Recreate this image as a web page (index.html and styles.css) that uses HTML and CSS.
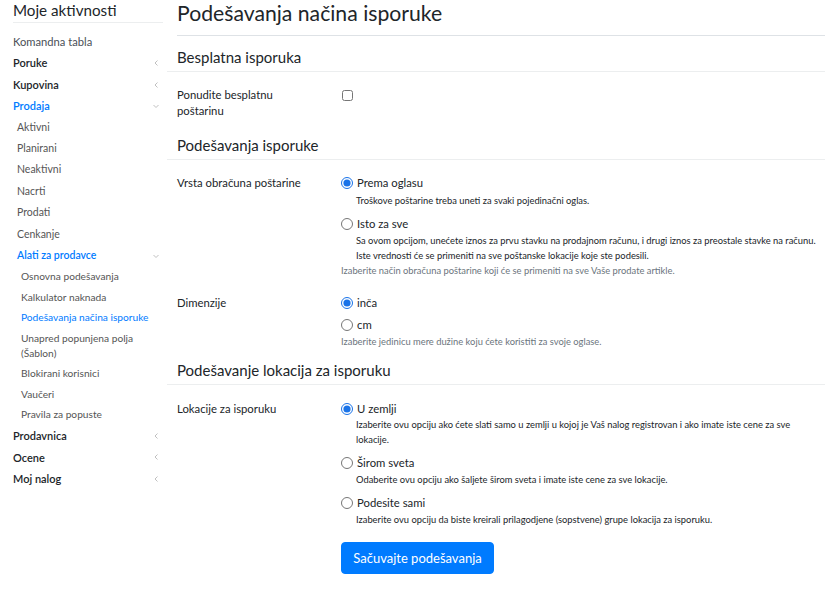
FILE: index.html
```html
<!DOCTYPE html>
<html lang="sr">
<head>
<meta charset="utf-8">
<title>Podešavanja načina isporuke</title>
<link rel="stylesheet" href="styles.css">
</head>
<body>
<div class="page">
  <aside class="sidebar">
    <h2 class="side-title">Moje aktivnosti</h2>
    <ul class="menu">
      <li class="item plain">Komandna tabla</li>
      <li class="item top"><span>Poruke</span><svg class="chev" viewBox="0 0 8 8"><path d="M5.5 1.5 3 4l2.5 2.5"/></svg></li>
      <li class="item top"><span>Kupovina</span><svg class="chev" viewBox="0 0 8 8"><path d="M5.5 1.5 3 4l2.5 2.5"/></svg></li>
      <li class="item top active"><span>Prodaja</span><svg class="chev" viewBox="0 0 8 8"><path d="M1.5 3 4 5.5 6.5 3"/></svg></li>
      <li class="item sub">Aktivni</li>
      <li class="item sub">Planirani</li>
      <li class="item sub">Neaktivni</li>
      <li class="item sub">Nacrti</li>
      <li class="item sub">Prodati</li>
      <li class="item sub">Cenkanje</li>
      <li class="item sub sub-head active"><span>Alati za prodavce</span><svg class="chev" viewBox="0 0 8 8"><path d="M1.5 3 4 5.5 6.5 3"/></svg></li>
      <li class="item subsub">Osnovna podešavanja</li>
      <li class="item subsub">Kalkulator naknada</li>
      <li class="item subsub current">Podešavanja načina isporuke</li>
      <li class="item subsub">Unapred popunjena polja (Šablon)</li>
      <li class="item subsub">Blokirani korisnici</li>
      <li class="item subsub">Vaučeri</li>
      <li class="item subsub">Pravila za popuste</li>
      <li class="item top"><span>Prodavnica</span><svg class="chev" viewBox="0 0 8 8"><path d="M5.5 1.5 3 4l2.5 2.5"/></svg></li>
      <li class="item top"><span>Ocene</span><svg class="chev" viewBox="0 0 8 8"><path d="M5.5 1.5 3 4l2.5 2.5"/></svg></li>
      <li class="item top"><span>Moj nalog</span><svg class="chev" viewBox="0 0 8 8"><path d="M5.5 1.5 3 4l2.5 2.5"/></svg></li>
    </ul>
  </aside>

  <main class="content">
    <h1 class="page-title">Podešavanja načina isporuke</h1>

    <h3 class="section-title">Besplatna isporuka</h3>
    <div class="row row-free">
      <div class="label">Ponudite besplatnu<br>poštarinu</div>
      <div class="control"><input type="checkbox" class="check"></div>
    </div>

    <h3 class="section-title">Podešavanja isporuke</h3>
    <div class="row">
      <div class="label">Vrsta obračuna poštarine</div>
      <div class="control">
        <label class="opt"><input type="radio" name="v" checked><span>Prema oglasu</span></label>
        <p class="help">Troškove poštarine treba uneti za svaki pojedinačni oglas.</p>
        <label class="opt"><input type="radio" name="v"><span>Isto za sve</span></label>
        <p class="help help-last">Sa ovom opcijom, unećete iznos za prvu stavku na prodajnom računu, i drugi iznos za preostale stavke na računu. Iste vrednosti će se primeniti na sve poštanske lokacije koje ste podesili.</p>
        <p class="muted">Izaberite način obračuna poštarine koji će se primeniti na sve Vaše prodate artikle.</p>
      </div>
    </div>
    <div class="row row-dim">
      <div class="label">Dimenzije</div>
      <div class="control">
        <label class="opt"><input type="radio" name="d" checked><span>inča</span></label>
        <label class="opt opt-tight"><input type="radio" name="d"><span>cm</span></label>
        <p class="muted">Izaberite jedinicu mere dužine koju ćete koristiti za svoje oglase.</p>
      </div>
    </div>

    <h3 class="section-title">Podešavanje lokacija za isporuku</h3>
    <div class="row row-loc">
      <div class="label">Lokacije za isporuku</div>
      <div class="control">
        <label class="opt"><input type="radio" name="l" checked><span>U zemlji</span></label>
        <p class="help">Izaberite ovu opciju ako ćete slati samo u zemlji u kojoj je Vaš nalog registrovan i ako imate iste cene za sve lokacije.</p>
        <label class="opt"><input type="radio" name="l"><span>Širom sveta</span></label>
        <p class="help">Odaberite ovu opciju ako šaljete širom sveta i imate iste cene za sve lokacije.</p>
        <label class="opt"><input type="radio" name="l"><span>Podesite sami</span></label>
        <p class="help help-last">Izaberite ovu opciju da biste kreirali prilagodjene (sopstvene) grupe lokacija za isporuku.</p>
        <button class="btn" type="button">Sačuvajte podešavanja</button>
      </div>
    </div>
  </main>
</div>
</body>
</html>
```

FILE: styles.css
```css
* { box-sizing: border-box; }
html, body { margin: 0; padding: 0; background: #fff; }
body {
  font-family: Lato, "Noto Sans", Arial, sans-serif;
  color: #212529;
  font-size: 11.3px;
}
.page { display: flex; align-items: flex-start; }

.sidebar { width: 167px; padding-left: 13px; padding-right: 4px; flex: none; }
.side-title {
  margin: 0;
  font-size: 15.2px;
  font-weight: 400;
  line-height: 20px;
  padding-bottom: 2px;
  border-bottom: 1px solid #eceeef;
  color: #212529;
}
.menu { list-style: none; margin: 8px 0 0; padding: 0; }
.item {
  display: flex; align-items: center; justify-content: space-between;
  line-height: 15.4px; padding: 3px 0;
  font-size: 11.2px;
}
.item.plain { color: #495057; }
.item.top { color: #212529; font-weight: 600; font-size: 11px; }
.item.active { color: #007bff; }
.item.sub { padding-left: 4px; font-size: 10.5px; color: #555; }
.item.sub-head { font-weight: 600; color: #007bff; }
.item.subsub { padding: 2.55px 0 2.55px 8px; font-size: 10.2px; color: #555; line-height: 15.4px; }
.item.current { color: #007bff; }
.chev { width: 8px; height: 8px; margin-right: 3px; fill: none; stroke: #b0b0b0; stroke-width: 0.8; flex: none; }

.content { flex: 1; min-width: 0; }
.page-title {
  margin: 0 0 0 10px;
  font-size: 21.2px; font-weight: 400; line-height: 26px;
  padding-bottom: 9px;
  border-bottom: 1px solid #dee2e6;
}
.section-title {
  margin: 0;
  font-size: 15px; font-weight: 400; line-height: 20px;
  padding: 10.5px 0 4.5px 10px;
  border-bottom: 1px solid #eceeef;
}
.row { display: flex; padding: 15px 0 0 10px; }
.row-free { padding-bottom: 5px; }
.row-dim { padding-top: 16.5px; }
.row-loc { padding-top: 15.5px; }
.label { width: 164px; flex: none; line-height: 16px; font-size: 11.3px; }
.control { flex: 1; min-width: 0; padding-right: 6px; }
.check { width: 11px; height: 11px; margin: 3px 0 0 1px; display: block; }
.opt { display: flex; align-items: center; gap: 4px; line-height: 16px; font-size: 11.3px; }
.opt input { width: 12px; height: 12px; margin: 0; accent-color: #1a73e8; flex: none; }
.help { margin: 1.5px 0 8px 15px; font-size: 9.35px; line-height: 15px; }
.help.help-last { margin-bottom: 0; }
.muted { margin: 0; font-size: 9.35px; line-height: 15px; color: #6c757d; }
.opt-tight { margin-top: 6px; }
.opt-tight + .muted { margin-top: 1.5px; }
.row-loc .help { line-height: 14.5px; }
.btn {
  margin-top: 14.5px;
  background: #007bff; color: #fff; border: 1px solid #007bff;
  border-radius: 4px; font-family: inherit; font-size: 13px;
  width: 153px; height: 32px; padding: 0;
}
```
